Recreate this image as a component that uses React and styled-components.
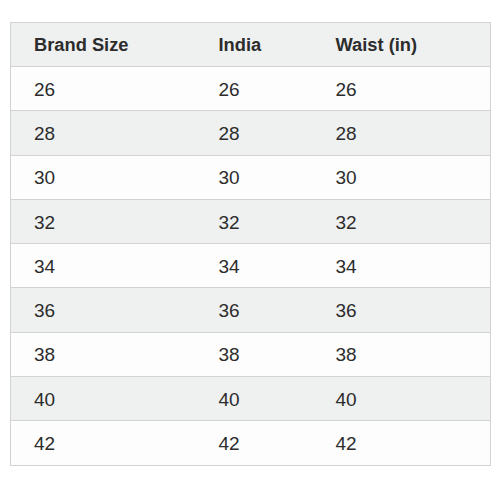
import React from "react";
import styled, { createGlobalStyle } from "styled-components";

const Global = createGlobalStyle`
  html, body { margin: 0; padding: 0; background: #ffffff; }
  body { font-family: "Liberation Sans", Arial, sans-serif; }
`;

const Page = styled.div`
  width: 500px;
  height: 500px;
  padding: 22px 10px 0 10px;
  box-sizing: border-box;
  background: #fff;
`;

const Table = styled.table`
  width: 480px;
  border-collapse: collapse;
  table-layout: fixed;
  border: 1px solid #d3d3d3;
  color: #2c2c2c;
`;

const Col = styled.col`
  width: ${(p) => p.$w};
`;

const HeadRow = styled.tr`
  background: #eff0f0;
  height: 44px;
`;

const Th = styled.th`
  text-align: left;
  font-weight: 700;
  font-size: 18.3px;
  padding: 0 0 0 23px;
  border-bottom: 1px solid #d3d3d3;
`;

const Row = styled.tr`
  background: ${(p) => (p.$alt ? "#eff0f0" : "#fdfdfd")};
  height: 44.3px;
`;

const Td = styled.td`
  font-size: 19px;
  padding: 2px 0 0 23px;
  border-bottom: 1px solid #d3d3d3;
`;

const sizes = [26, 28, 30, 32, 34, 36, 38, 40, 42];

export default function App() {
  return (
    <>
      <Global />
      <Page>
        <Table>
          <colgroup>
            <Col $w="185px" />
            <Col $w="117px" />
            <Col $w="178px" />
          </colgroup>
          <thead>
            <HeadRow>
              <Th>Brand Size</Th>
              <Th>India</Th>
              <Th>Waist (in)</Th>
            </HeadRow>
          </thead>
          <tbody>
            {sizes.map((s, i) => (
              <Row key={s} $alt={i % 2 === 1}>
                <Td>{s}</Td>
                <Td>{s}</Td>
                <Td>{s}</Td>
              </Row>
            ))}
          </tbody>
        </Table>
      </Page>
    </>
  );
}
